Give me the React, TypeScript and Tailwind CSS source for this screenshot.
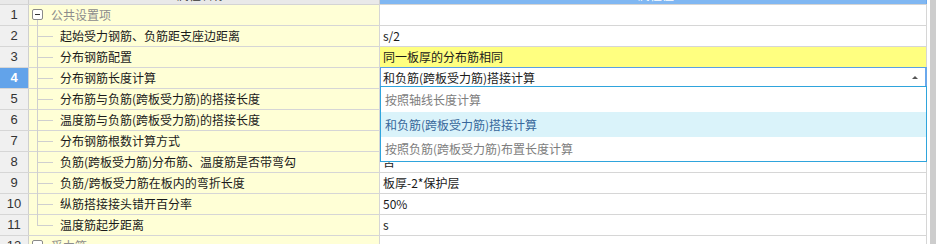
import React from "react";

type Row = {
  n: number;
  name: string;
  value?: string;
  kind: "group" | "child" | "last";
  hl?: boolean;
};

const rows: Row[] = [
  { n: 1, name: "公共设置项", kind: "group" },
  { n: 2, name: "起始受力钢筋、负筋距支座边距离", value: "s/2", kind: "child" },
  { n: 3, name: "分布钢筋配置", value: "同一板厚的分布筋相同", kind: "child", hl: true },
  { n: 4, name: "分布钢筋长度计算", value: "和负筋(跨板受力筋)搭接计算", kind: "child" },
  { n: 5, name: "分布筋与负筋(跨板受力筋)的搭接长度", kind: "child" },
  { n: 6, name: "温度筋与负筋(跨板受力筋)的搭接长度", kind: "child" },
  { n: 7, name: "分布钢筋根数计算方式", kind: "child" },
  { n: 8, name: "负筋(跨板受力筋)分布筋、温度筋是否带弯勾", value: "否", kind: "child" },
  { n: 9, name: "负筋/跨板受力筋在板内的弯折长度", value: "板厚-2*保护层", kind: "child" },
  { n: 10, name: "纵筋搭接接头错开百分率", value: "50%", kind: "child" },
  { n: 11, name: "温度筋起步距离", value: "s", kind: "last" },
  { n: 12, name: "受力筋", kind: "group" },
];

function Box() {
  return (
    <div className="absolute left-[3px] top-[4px] w-[11px] h-[11px] border border-[#8a8a8a] rounded-[2px] bg-white flex items-center justify-center">
      <div className="w-[5px] h-[1px] bg-[#333]" />
    </div>
  );
}

function Tree({ kind }: { kind: Row["kind"] }) {
  if (kind === "group") {
    return (
      <div className="relative w-[22px] h-full shrink-0">
        <Box />
        <div className="absolute left-[8px] top-[15px] -bottom-[1px] w-[1px] bg-[#cfcfcf]" />
      </div>
    );
  }
  return (
    <div className="relative w-[31px] h-full shrink-0">
      <div
        className={
          kind === "last"
            ? "absolute left-[8px] top-0 h-[10px] w-[1px] bg-[#cfcfcf]"
            : "absolute left-[8px] top-0 -bottom-[1px] w-[1px] bg-[#cfcfcf]"
        }
      />
      <div className="absolute left-[8px] top-[10px] w-[16px] h-[1px] bg-[#cfcfcf]" />
    </div>
  );
}

export default function App() {
  return (
    <div
      className="w-[936px] h-[244px] overflow-hidden bg-white flex text-[12px] text-[#1a1a1a]"
      style={{ fontFamily: '"Noto Sans CJK SC", "Noto Sans", sans-serif' }}
    >
      <div className="relative w-[927px] shrink-0 flex flex-col">
        {/* header (mostly scrolled off) */}
        <div className="flex h-[5px] shrink-0 overflow-hidden border-b border-[#d4d4d4]">
          <div className="w-[29px] shrink-0 bg-[#e9e9e9] border-r border-[#cfcfcf]" />
          <div className="w-[351px] shrink-0 bg-[#e9e9e9] border-r border-[#cfcfcf] relative">
            <div className="absolute left-[148px] -top-[13px] text-[12px] text-[#333] leading-[16px]">属性名称</div>
          </div>
          <div className="w-[547px] shrink-0 bg-[#80b7f2] border-r border-[#6aa8ec] relative">
            <div className="absolute left-[258px] -top-[13px] text-[12px] text-white leading-[16px]">属性值</div>
          </div>
        </div>

        {rows.map((r) => {
          const sel = r.n === 4;
          return (
            <div key={r.n} className="flex h-[21px] shrink-0 border-b border-[#d6d6d6]">
              <div
                className={
                  sel
                    ? "w-[29px] shrink-0 border-r border-[#cfcfcf] bg-[#62a3ea] text-white font-bold flex items-center justify-center text-[13px]"
                    : "w-[29px] shrink-0 border-r border-[#cfcfcf] bg-[#f0f0f0] text-[#333] flex items-center justify-center text-[13px]"
                }
                style={{ fontFamily: '"Liberation Sans", Arial, sans-serif' }}
              >
                {r.n}
              </div>
              <div className="w-[351px] shrink-0 border-r border-[#d6d6d6] bg-[#ffffd6] flex items-center">
                <Tree kind={r.kind} />
                <span className={r.kind === "group" ? "text-[#8c8c8c] whitespace-nowrap" : "whitespace-nowrap"}>
                  {r.name}
                </span>
              </div>
              <div
                className={
                  r.hl
                    ? "w-[547px] shrink-0 border-r border-[#d6d6d6] bg-[#ffff80] flex items-center pl-[3px]"
                    : "w-[547px] shrink-0 border-r border-[#d6d6d6] bg-white flex items-center pl-[3px]"
                }
              >
                <span className="whitespace-nowrap">{r.value ?? ""}</span>
              </div>
            </div>
          );
        })}

        {/* editing cell frame */}
        <div className="absolute left-[380px] top-[67px] w-[547px] h-[20px] border-t border-l border-[#5a9fe6] border-r-2 border-r-[#6aa8ec]">
          <div className="absolute right-[7px] top-[8px] w-0 h-0 border-l-[3px] border-r-[3px] border-b-[3px] border-l-transparent border-r-transparent border-b-[#555]" />
        </div>

        {/* dropdown list */}
        <div className="absolute left-[380px] top-[86px] w-[547px] h-[76px] border border-[#2fa4dc] bg-white flex flex-col">
          <div className="h-[25px] flex items-center pl-[4px] text-[#7d7d7d]">按照轴线长度计算</div>
          <div className="h-[25px] flex items-center pl-[4px] bg-[#daf3fa] text-[#37679a]">和负筋(跨板受力筋)搭接计算</div>
          <div className="h-[24px] flex items-center pl-[4px] text-[#7d7d7d]">按照负筋(跨板受力筋)布置长度计算</div>
        </div>
      </div>
      <div className="w-[3px] shrink-0 bg-white" />
      <div className="w-[6px] shrink-0 bg-[#cdcdcd]" />
    </div>
  );
}
